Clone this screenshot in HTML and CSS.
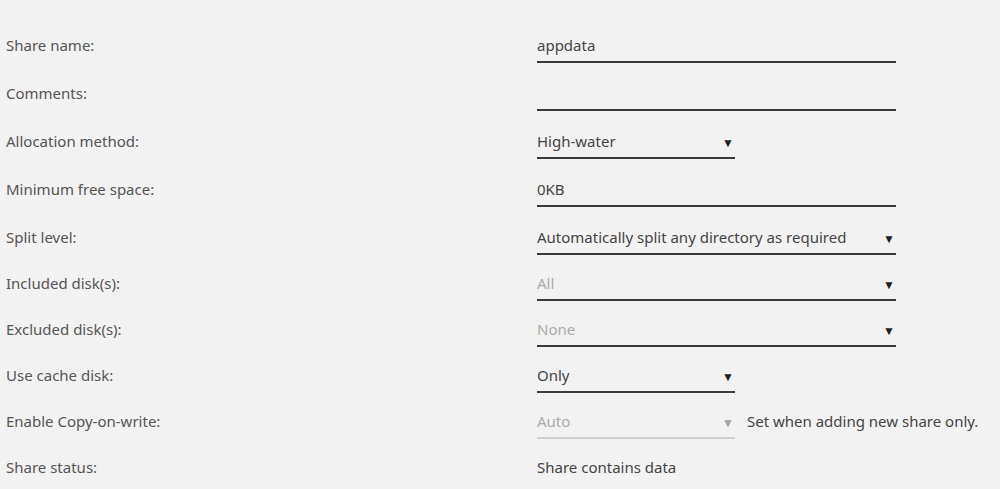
FILE: index.html
```html
<!DOCTYPE html>
<html lang="en">
<head>
    <meta charset="UTF-8">
    <meta name="viewport" content="width=device-width, initial-scale=1.0">
    <title>Share Settings</title>
    <link rel="stylesheet" href="styles.css">
</head>
<body>

    <form class="share-form">

        <div class="row">
            <label>Share name:</label>
            <div class="field wide">appdata</div>
        </div>

        <div class="row">
            <label>Comments:</label>
            <div class="field wide"></div>
        </div>

        <div class="row">
            <label>Allocation method:</label>
            <div class="field short select">High-water<span class="arrow">&#9660;</span></div>
        </div>

        <div class="row">
            <label>Minimum free space:</label>
            <div class="field wide">0KB</div>
        </div>

        <div class="row">
            <label>Split level:</label>
            <div class="field wide select">Automatically split any directory as required<span class="arrow">&#9660;</span></div>
        </div>

        <div class="row">
            <label>Included disk(s):</label>
            <div class="field wide select placeholder">All<span class="arrow">&#9660;</span></div>
        </div>

        <div class="row">
            <label>Excluded disk(s):</label>
            <div class="field wide select placeholder">None<span class="arrow">&#9660;</span></div>
        </div>

        <div class="row">
            <label>Use cache disk:</label>
            <div class="field short select">Only<span class="arrow">&#9660;</span></div>
        </div>

        <div class="row">
            <label>Enable Copy-on-write:</label>
            <div class="value-line">
                <div class="field short select disabled">Auto<span class="arrow">&#9660;</span></div>
                <span class="note">Set when adding new share only.</span>
            </div>
        </div>

        <div class="row last">
            <label>Share status:</label>
            <div class="plain">Share contains data</div>
        </div>

    </form>

</body>
</html>
```

FILE: styles.css
```css
* {
    margin: 0;
    padding: 0;
    box-sizing: border-box;
}

body {
    background: #f2f2f2;
    font-family: "Noto Sans", "Open Sans", sans-serif;
    font-size: 15px;
    color: #555;
    overflow: hidden;
}

.share-form {
    padding: 28px 0 0 6px;
}

/* one label + one control per line */
.row {
    display: grid;
    grid-template-columns: 531px 1fr;
    height: 48px;
    align-items: start;
}

/* the select rows further down sit a little closer */
.row:nth-child(n+5) {
    height: 46px;
}

.row label {
    padding-top: 7px;
    line-height: 20px;
}

.field {
    position: relative;
    line-height: 20px;
    height: 35px;
    padding: 7px 0 6px;
    border-bottom: 2px solid #3a3a3a;
    color: #444;
}

.field.wide {
    width: 359px;
}

.field.short {
    width: 198px;
}

.select .arrow {
    position: absolute;
    right: 1px;
    top: 9px;
    font-size: 12px;
    color: #1e1e1e;
}

.placeholder {
    color: #ababab;
}

.disabled {
    color: #ababab;
    border-bottom-color: #d0d0d0;
}

.disabled .arrow {
    color: #a0a0a0;
}

.value-line {
    display: flex;
    align-items: flex-start;
    gap: 12px;
}

.note {
    padding-top: 7px;
    line-height: 20px;
    color: #444;
}

.plain {
    padding-top: 7px;
    line-height: 20px;
    color: #444;
}
```
